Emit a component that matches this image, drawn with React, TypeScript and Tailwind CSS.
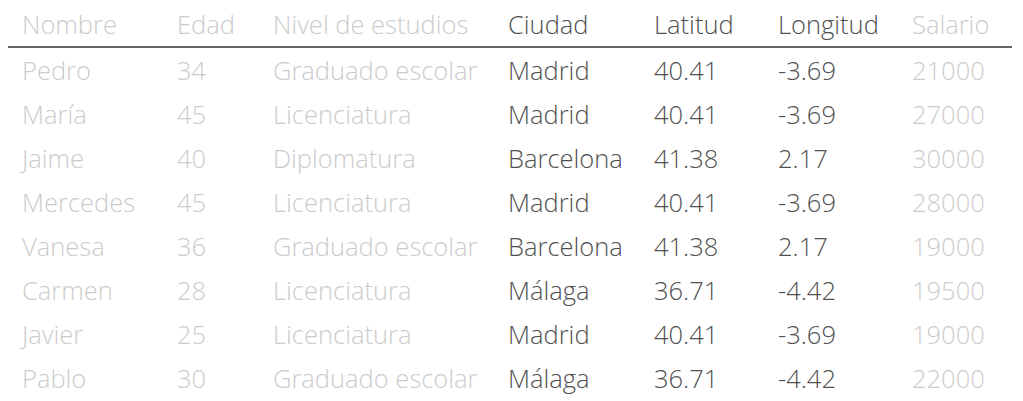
import React from "react";

const cols = ["Nombre", "Edad", "Nivel de estudios", "Ciudad", "Latitud", "Longitud", "Salario"];
const dark = [false, false, false, true, true, true, false];
const rows: string[][] = [
  ["Pedro", "34", "Graduado escolar", "Madrid", "40.41", "-3.69", "21000"],
  ["María", "45", "Licenciatura", "Madrid", "40.41", "-3.69", "27000"],
  ["Jaime", "40", "Diplomatura", "Barcelona", "41.38", "2.17", "30000"],
  ["Mercedes", "45", "Licenciatura", "Madrid", "40.41", "-3.69", "28000"],
  ["Vanesa", "36", "Graduado escolar", "Barcelona", "41.38", "2.17", "19000"],
  ["Carmen", "28", "Licenciatura", "Málaga", "36.71", "-4.42", "19500"],
  ["Javier", "25", "Licenciatura", "Madrid", "40.41", "-3.69", "19000"],
  ["Pablo", "30", "Graduado escolar", "Málaga", "36.71", "-4.42", "22000"],
];

const grid = "grid grid-cols-[155px_96px_235px_146px_124px_134px_114px]";

export default function App() {
  return (
    <div
      className="w-[1023px] h-[401px] bg-white overflow-hidden pl-[8px]"
      style={{ fontFamily: '"Open Sans", sans-serif' }}
    >
      <div className="w-[1004px] font-light text-[25.5px]">
        <div className={`${grid} h-[48px] pt-[2px] border-b-2 border-[#666]`}>
          {cols.map((c, i) => (
            <div
              key={c}
              className={`pl-[14px] leading-[44px] whitespace-nowrap ${dark[i] ? "text-[#505050]" : "text-[#cccccc]"}`}
            >
              {c}
            </div>
          ))}
        </div>
        {rows.map((r, ri) => (
          <div key={ri} className={grid}>
            {r.map((v, i) => (
              <div
                key={i}
                className={`pl-[14px] leading-[44px] whitespace-nowrap ${dark[i] ? "text-[#505050]" : "text-[#cccccc]"}`}
              >
                {v}
              </div>
            ))}
          </div>
        ))}
      </div>
    </div>
  );
}
